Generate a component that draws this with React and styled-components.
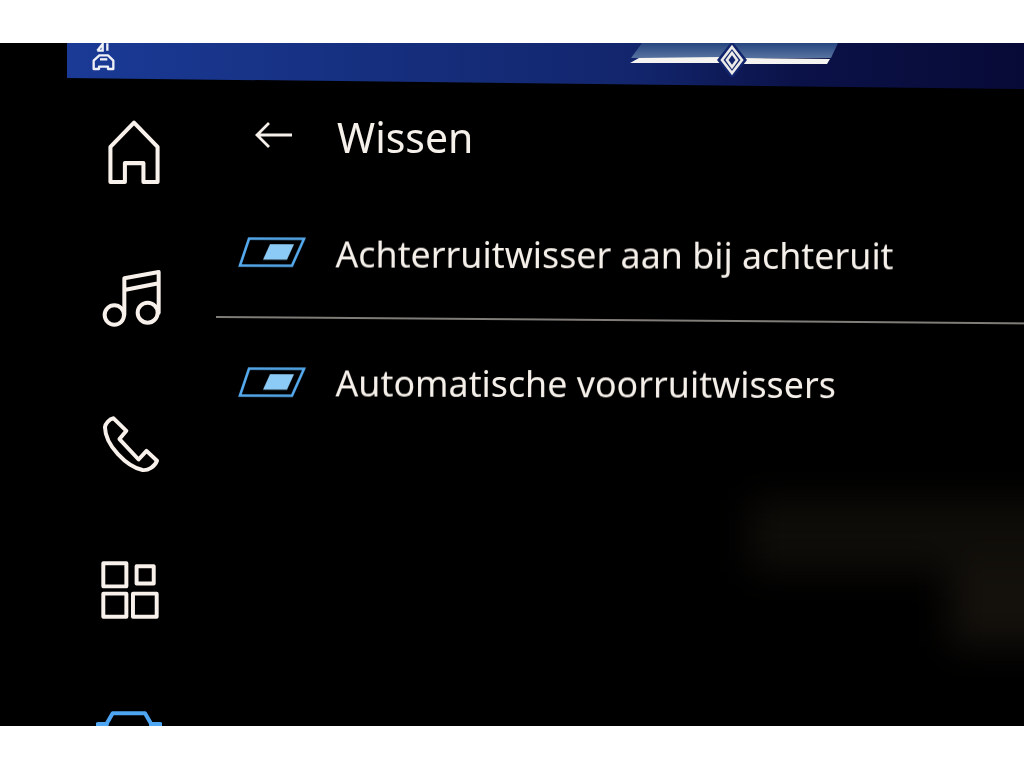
import React from 'react';
import styled, { createGlobalStyle } from 'styled-components';

const Global = createGlobalStyle`
  html, body { margin: 0; padding: 0; background: #fff; }
  body { font-family: 'Noto Sans', 'Open Sans', sans-serif; }
`;

const Screen = styled.div`
  position: relative;
  margin-top: 43px;
  height: 683px;
  background: #000;
  overflow: hidden;
`;

// faint reflection bottom right
const Glow = styled.div`
  position: absolute;
  left: 750px;
  top: 458px;
  width: 320px;
  height: 70px;
  background: #0f0d09;
  filter: blur(18px);
  &::after {
    content: '';
    position: absolute;
    left: 200px;
    top: 60px;
    width: 120px;
    height: 85px;
    background: #14110c;
  }
`;

const TopBar = styled.div`
  position: relative;
  margin-left: 67px;
  height: 46px;
  background: linear-gradient(90deg, #1a3a96 0%, #163080 30%, #12256c 60%, #0b1248 76%, #070a36 100%);
  clip-path: polygon(0 0, 100% 0, 100% 100%, 0 76%);
`;

const BarCar = styled.svg`
  position: absolute;
  left: 22px;
  top: 0;
  width: 28px;
  height: 30px;
  fill: none;
  stroke: #eef0f6;
  stroke-width: 7;
  filter: blur(0.3px);
`;

const BrandTab = styled.svg`
  position: absolute;
  left: 560px;
  top: 0;
  width: 214px;
  height: 34px;
  filter: blur(0.3px);
`;

const Main = styled.div`
  position: relative;
  display: flex;
  margin-left: 67px;
  margin-top: -10px;
`;

const Rail = styled.nav`
  flex: 0 0 149px;
  display: flex;
  flex-direction: column;
`;

const RailSlot = styled.div`
  height: 146px;
  flex: none;
  display: flex;
  align-items: center;
  justify-content: center;
  padding-right: ${(p) => p.$inset}px;
  box-sizing: border-box;
`;

const RailIcon = styled.svg`
  display: block;
  flex: none;
  width: ${(p) => p.$w}px;
  height: ${(p) => p.$h}px;
  fill: none;
  stroke: ${(p) => p.$color || '#f8f0ea'};
  stroke-width: 12;
  stroke-linejoin: round;
  stroke-linecap: round;
  filter: blur(0.35px);
`;

const Content = styled.div`
  flex: 1;
  min-width: 0;
  color: #f6f0ea;
`;

const Header = styled.div`
  display: flex;
  align-items: center;
  height: 111px;
  padding-left: 38px;
`;

const BackIcon = styled.svg`
  width: 40px;
  height: 30px;
  margin-right: 43px;
  fill: none;
  stroke: #f6f0ea;
  stroke-width: 2.8;
`;

const Title = styled.h1`
  margin: 6px 0 0;
  font-size: 41px;
  font-weight: 400;
  line-height: 1;
  filter: blur(0.3px);
`;

const Row = styled.div`
  display: flex;
  align-items: center;
  height: 126px;
  padding-left: 22px;
  transform: rotate(0.2deg);
  transform-origin: left center;
  filter: blur(0.3px);
`;

const Toggle = styled.svg`
  flex: none;
  width: 68px;
  height: 30px;
  margin-right: 29.5px;
  margin-top: ${(p) => p.$lift * -2}px;
`;

const Label = styled.span`
  font-size: 35.8px;
  font-weight: 400;
  white-space: nowrap;
`;

const Divider = styled.div`
  width: 820px;
  height: 2px;
  margin-bottom: 1px;
  background: #807c78;
  transform: rotate(0.45deg);
  transform-origin: left center;
`;

function ToggleIcon({ lift = 0 }) {
  return (
    <Toggle viewBox="0 0 68 30" $lift={lift}>
      <polygon points="11,1.5 66,1.5 54,28.5 2,28.5" fill="none" stroke="#55aaee" strokeWidth="2.6" />
      <polygon points="32,7 56,7 49,22.5 25,22.5" fill="#8ccbf6" />
    </Toggle>
  );
}

export default function App() {
  return (
    <>
      <Global />
      <Screen>
        <Glow />
        <TopBar>
          <BarCar viewBox="87 9 84 90">
            <path d="M112 32 L128 12 V32 H112 M142 10 V32" />
            <path d="M101 87 V62 L118 46 H144 L160 62 V87 H144 V80 H117 V87 Z" strokeLinejoin="round" />
            <path d="M120 58 H142" />
          </BarCar>
          <BrandTab viewBox="0 0 214 34">
            <defs>
              <linearGradient id="tab" x1="0" y1="0" x2="0" y2="1">
                <stop offset="0" stopColor="#27467f" />
                <stop offset="1" stopColor="#56729f" />
              </linearGradient>
            </defs>
            <polygon points="15,0 211,0 204,15 4,15" fill="url(#tab)" />
            <polygon points="3,20 12,15 93,14 93,20" fill="#f5f4f0" />
            <polygon points="117,15 203,16 200,21 117,21" fill="#f5f4f0" />
            <polygon points="105,-2 120,17 105,36 90,17" fill="#12256c" />
            <g fill="none" stroke="#ecebe8" strokeWidth="2.6">
              <polygon points="105,4 115,17 105,30 95,17" />
              <polygon points="105,10 110,17 105,24 100,17" />
            </g>
          </BrandTab>
        </TopBar>
        <Main>
          <Rail>
            <RailSlot $inset={16}>
              <RailIcon $w={54} $h={64} viewBox="143 240 158 190">
                <path d="M152 424 V320 L222 248 L292 320 V424 H250 V368 H195 V424 Z" />
              </RailIcon>
            </RailSlot>
            <RailSlot $inset={19}>
              <RailIcon $w={60} $h={58} viewBox="68 58 180 172">
                <circle cx="105" cy="195" r="29" />
                <circle cx="205" cy="188" r="30" />
                <path d="M135 195 V85 L238 66 V188 M135 120 L238 100" />
              </RailIcon>
            </RailSlot>
            <RailSlot $inset={22}>
              <RailIcon $w={58} $h={58} viewBox="65 495 176 172">
                <path d="M100 503 L139 541 L118 566 L176 628 L200 602 L232 632 C225 650 205 662 188 660 C140 650 75 585 74 530 C75 518 88 505 100 503 Z" />
              </RailIcon>
            </RailSlot>
            <RailSlot $inset={24}>
              <RailIcon $w={58} $h={58} viewBox="63 63 176 176">
                <rect x="70" y="70" width="70" height="70" />
                <rect x="171" y="79" width="52" height="52" />
                <rect x="70" y="162" width="70" height="70" />
                <rect x="160" y="162" width="72" height="70" />
              </RailIcon>
            </RailSlot>
            <RailSlot $inset={26}>
              <RailIcon $w={66} $h={56} $color="#4ea5f2" viewBox="48 502 198 168">
                <path d="M78 552 L98 518 H195 L215 552 M78 552 V640 H215 V552" />
                <path d="M55 552 H78 M215 552 H240" strokeWidth="16" />
              </RailIcon>
            </RailSlot>
          </Rail>
          <Content>
            <Header>
              <BackIcon viewBox="0 0 40 30">
                <path d="M38 15 H3 M15 3 L3 15 L15 27" />
              </BackIcon>
              <Title>Wissen</Title>
            </Header>
            <Row>
              <ToggleIcon lift={1} />
              <Label>Achterruitwisser aan bij achteruit</Label>
            </Row>
            <Divider />
            <Row>
              <ToggleIcon />
              <Label>Automatische voorruitwissers</Label>
            </Row>
          </Content>
        </Main>
      </Screen>
    </>
  );
}
